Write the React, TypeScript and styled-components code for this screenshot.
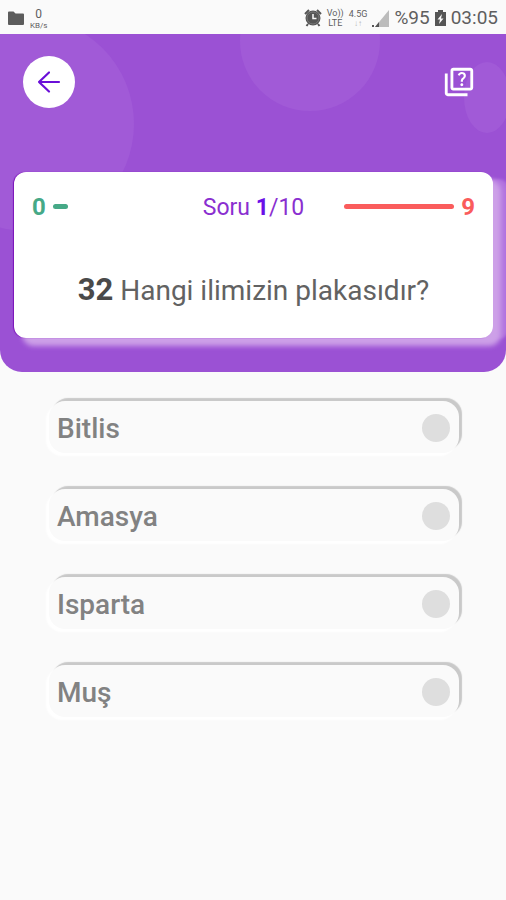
import React from "react";
import styled, { createGlobalStyle } from "styled-components";
import { MdOutlineQuiz } from "react-icons/md";

const GlobalStyle = createGlobalStyle`
  * { box-sizing: border-box; }
  body { margin: 0; background: #fafafa; font-family: Roboto, "Noto Sans", sans-serif; }
`;

const Page = styled.div`
  min-height: 100vh;
  background: #fafafa;
`;

const StatusBar = styled.div`
  display: flex;
  align-items: center;
  justify-content: space-between;
  height: 34px;
  padding: 2px 8px 0 7px;
  color: #5f5f5f;
`;

const StatusGroup = styled.div<{ $gap: number }>`
  display: flex;
  align-items: center;
  gap: ${(p) => p.$gap}px;
`;

const StatusText = styled.span`
  font-size: 19px;
  line-height: 24px;
`;

const Stack = styled.span<{ $size: number; $line: number }>`
  display: flex;
  flex-direction: column;
  align-items: center;
  font-size: ${(p) => p.$size}px;
  line-height: ${(p) => p.$line}px;
`;

const Small = styled.small<{ $faint?: boolean }>`
  font-size: 8px;
  line-height: 9px;
  opacity: ${(p) => (p.$faint ? 0.45 : 1)};
`;

const Header = styled.header`
  position: relative;
  overflow: hidden;
  padding: 22px 13px 34px 14px;
  border-radius: 0 0 22px 22px;
  background: #9b51d4;
`;

const Bubble = styled.span<{ $x: number; $y: number; $w: number; $h: number }>`
  position: absolute;
  left: ${(p) => p.$x}px;
  top: ${(p) => p.$y}px;
  width: ${(p) => p.$w}px;
  height: ${(p) => p.$h}px;
  border-radius: 50%;
  background: #a15ad7;
`;

const TopBar = styled.div`
  position: relative;
  display: flex;
  align-items: center;
  justify-content: space-between;
  padding: 0 17px 0 9px;
  margin-bottom: 64px;
`;

const RoundButton = styled.button`
  display: flex;
  align-items: center;
  justify-content: center;
  width: 52px;
  height: 52px;
  padding: 0;
  border: 0;
  border-radius: 50%;
  background: #fff;
  color: #6a0fd8;
`;

const IconButton = styled.button`
  display: flex;
  padding: 0;
  border: 0;
  background: none;
  color: #fff;
`;

const Card = styled.section`
  position: relative;
  padding: 18px 18px 29px;
  border-radius: 12px;
  background: #fff;
  box-shadow: -1px 0 1px #7a12b8, 8px 8px 5px #cda0e8, 18px 4px 3px -3px #b273df;
`;

const ScoreRow = styled.div`
  display: grid;
  grid-template-columns: 1fr auto 1fr;
  align-items: center;
  height: 34px;
`;

const Score = styled.div<{ $color: string; $end?: boolean }>`
  display: flex;
  align-items: center;
  justify-content: ${(p) => (p.$end ? "flex-end" : "flex-start")};
  gap: 7px;
  color: ${(p) => p.$color};
  font-size: 24px;
  line-height: 34px;
  font-weight: 700;
`;

const Bar = styled.span<{ $width: number }>`
  width: ${(p) => p.$width}px;
  height: 5px;
  margin-bottom: 2px;
  border-radius: 3px;
  background: currentColor;
`;

const Counter = styled.div`
  padding-top: 2px;
  font-size: 23px;
  line-height: 32px;
  color: #8a2fd0;
  b { color: #6a0fe8; }
`;

const Question = styled.h1`
  margin: 48px 0 0;
  text-align: center;
  font-size: 28px;
  line-height: 36px;
  font-weight: 400;
  color: #626262;
  b { font-size: 31px; color: #4a4a4a; }
`;

const Options = styled.main`
  display: flex;
  flex-direction: column;
  gap: 36px;
  padding: 29px 47px 28px 49px;
`;

const Option = styled.label`
  display: flex;
  align-items: center;
  justify-content: space-between;
  height: 52px;
  padding: 0 9px 0 8px;
  border-radius: 16px;
  background: #fafafa;
  box-shadow: -3px 3px 2px #fff, 3px -3px 1px #c9c9c9;
  color: #828282;
  font-size: 28px;
  line-height: 36px;
  font-weight: 500;
`;

const OptionText = styled.span`
  padding-top: 4px;
`;

const Radio = styled.input`
  appearance: none;
  width: 28px;
  height: 28px;
  margin: 2px 0 0;
  border-radius: 50%;
  background: #dedede;
  &:checked { background: #9b51d4; }
`;

const answers = ["Bitlis", "Amasya", "Isparta", "Muş"];

const FolderIcon = () => (
  <svg width="18" height="16" viewBox="0 0 18 16" fill="#5c5c5c" aria-hidden="true">
    <path d="M1 2.5Q1 1.500 2 1.500H6.500L8.500 3.500H16Q17 3.500 17 4.500V14Q17 15 16 15H2Q1 15 1 14Z" />
  </svg>
);

const AlarmIcon = () => (
  <svg width="18" height="18" viewBox="0 0 18 18" aria-hidden="true">
    <circle cx="9" cy="9" r="7.500" fill="#555" />
    <path d="M1 5L5 1M17 5L13 1M4 15L2.500 17M14 15L15.500 17" stroke="#555" strokeWidth="2" />
    <path d="M9 5V9.500H12.500" stroke="#fafafa" strokeWidth="1.500" fill="none" />
    <circle cx="9" cy="9" r="6" stroke="#777" strokeWidth="1" fill="none" />
  </svg>
);

const SignalIcon = () => (
  <svg width="17" height="17" viewBox="0 0 17 17" aria-hidden="true">
    <path d="M3 17L17 0V17Z" fill="#bcbcbc" />
    <path d="M3 17L7 12V17ZM0 15h2v2H0Z" fill="#555" />
  </svg>
);

const BatteryIcon = () => (
  <svg width="11" height="18" viewBox="0 0 11 18" aria-hidden="true">
    <path d="M3 1H8V3H11V17H0V3H3Z" fill="#555" />
    <path d="M7 5L2.500 10.500H5L4 15L8.500 9.500H6Z" fill="#fafafa" />
  </svg>
);

const BackIcon = () => (
  <svg width="24" height="24" viewBox="0 0 24 24" fill="none" stroke="currentColor" strokeWidth="2.200" strokeLinecap="round" strokeLinejoin="round" aria-hidden="true">
    <path d="M22 12H2M12 2.500L2 12L12 21.500" />
  </svg>
);

export default function App() {
  return (
    <Page>
      <GlobalStyle />
      <StatusBar>
        <StatusGroup $gap={5}>
          <FolderIcon />
          <Stack $size={12} $line={14}>
            <span>0</span>
            <Small>KB/s</Small>
          </Stack>
        </StatusGroup>
        <StatusGroup $gap={5}>
          <AlarmIcon />
          <Stack $size={9} $line={10}>
            <span>Vo))</span>
            <span>LTE</span>
          </Stack>
          <Stack $size={9} $line={10}>
            <span>4.5G</span>
            <Small $faint>↓↑</Small>
          </Stack>
          <SignalIcon />
          <StatusText>%95</StatusText>
          <BatteryIcon />
          <StatusText>03:05</StatusText>
        </StatusGroup>
      </StatusBar>
      <Header>
        <Bubble $x={-80} $y={-17} $w={214} $h={214} />
        <Bubble $x={240} $y={-63} $w={140} $h={140} />
        <Bubble $x={464} $y={28} $w={46} $h={71} />
        <TopBar>
          <RoundButton type="button" aria-label="Geri">
            <BackIcon />
          </RoundButton>
          <IconButton type="button" aria-label="Sorular">
            <MdOutlineQuiz size={34} />
          </IconButton>
        </TopBar>
        <Card>
          <ScoreRow>
            <Score $color="#46a987">
              0<Bar $width={15} />
            </Score>
            <Counter>
              Soru <b>1</b>/10
            </Counter>
            <Score $color="#fa5c5c" $end>
              <Bar $width={110} />9
            </Score>
          </ScoreRow>
          <Question>
            <b>32</b> Hangi ilimizin plakasıdır?
          </Question>
        </Card>
      </Header>
      <Options>
        {answers.map((answer) => (
          <Option key={answer}>
            <OptionText>{answer}</OptionText>
            <Radio type="radio" name="answer" value={answer} />
          </Option>
        ))}
      </Options>
    </Page>
  );
}
